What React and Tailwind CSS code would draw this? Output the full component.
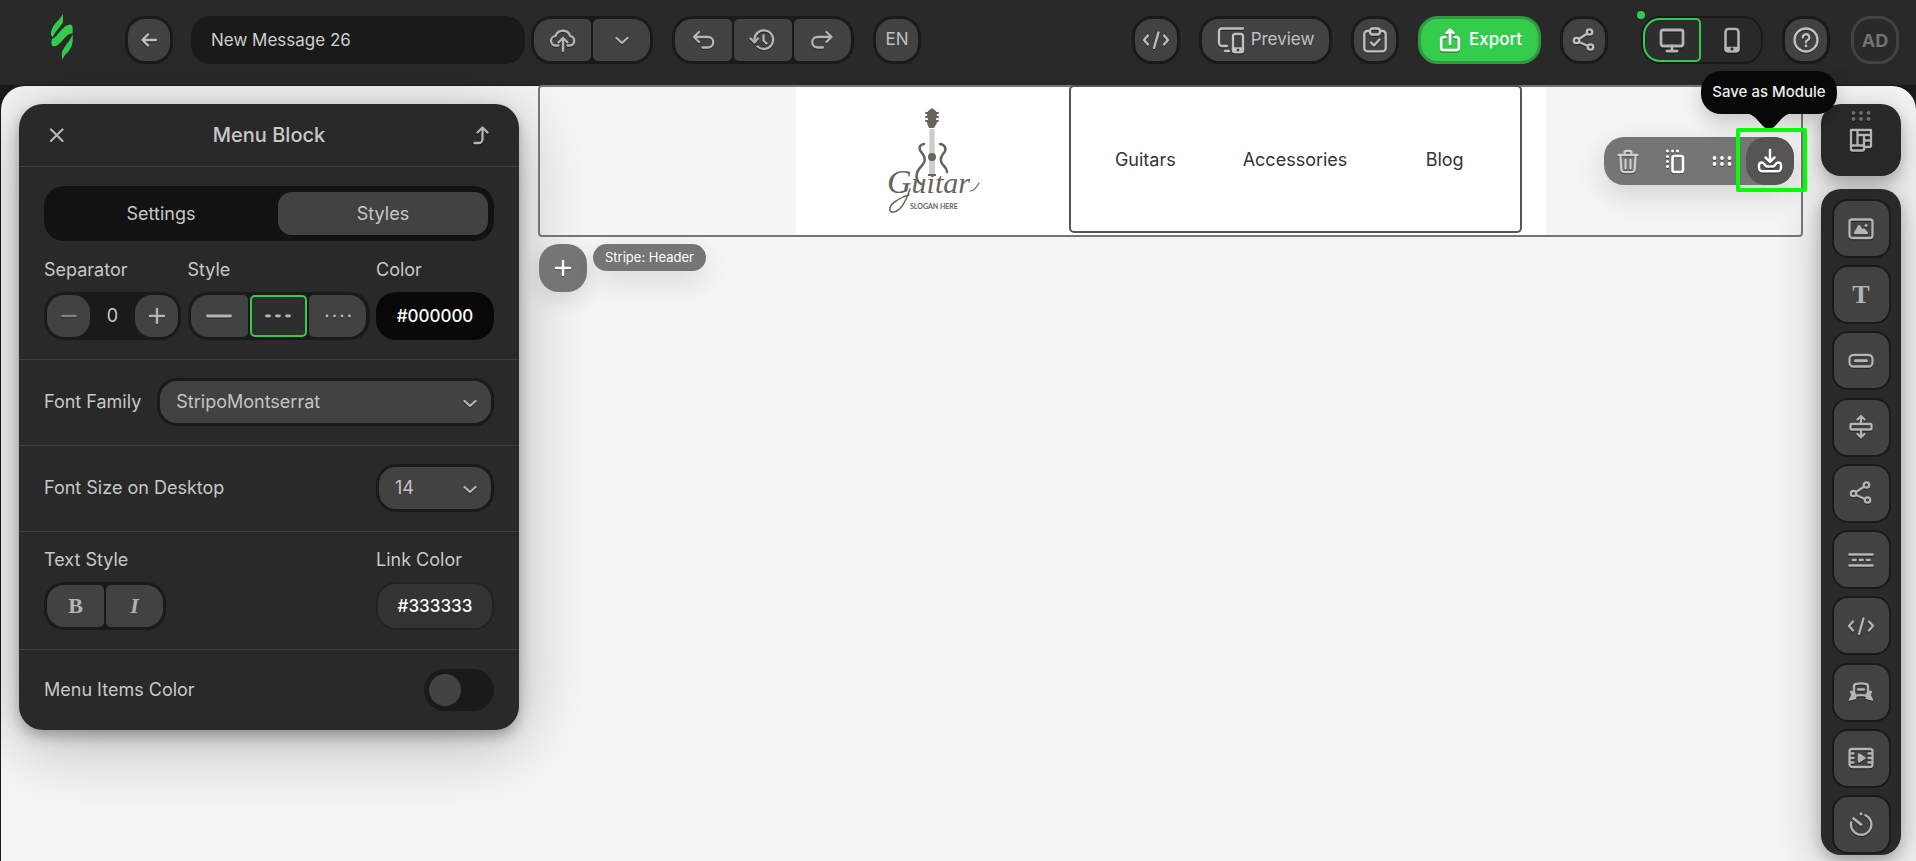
import { useState } from 'react';
import clsx from 'clsx';
import { twMerge } from 'tailwind-merge';

const Icon = ({ children, size = 28, className, strokeWidth = 2.3 }) => (
  <svg
    width={size}
    height={size}
    viewBox="0 0 28 28"
    fill="none"
    stroke="currentColor"
    strokeWidth={strokeWidth}
    strokeLinecap="round"
    strokeLinejoin="round"
    className={clsx('shrink-0 drop-shadow-[0_1px_0_rgba(0,0,0,0.5)]', className)}
    aria-hidden="true"
  >
    {children}
  </svg>
);

const BackIcon = () => (
  <Icon><path d="M21 14H8M13 8.5 7.5 14l5.5 5.5" /></Icon>
);

const CloudUploadIcon = () => (
  <Icon>
    <path d="M9.500 19.500H7a4.700 4.700 0 0 1-.5-9.400A7.700 7.700 0 0 1 21.200 10.200a4.700 4.700 0 0 1-.2 9.300h-2.500" />
    <path d="M14 25V13M9.500 16.500 14 12l4.500 4.500" />
  </Icon>
);

const ChevronIcon = ({ className }) => (
  <Icon className={className}><path d="m8.500 12 5.500 5 5.500-5" /></Icon>
);

const UndoIcon = () => (
  <Icon><path d="M9 6 4 11l5 5M4.500 11H18a5 5 0 0 1 0 10.500h-5.500" /></Icon>
);

const RedoIcon = () => (
  <Icon><path d="m18.500 6 5 5-5 5M23 11H9.500a5 5 0 0 0 0 10.500H15" /></Icon>
);

const HistoryIcon = () => (
  <Icon>
    <path d="M5.500 14a9.300 9.300 0 1 1 3 6.500" />
    <path d="M1.500 12.500 5.500 16.500l3.500-4M14.500 9.500v5l3 3" />
  </Icon>
);

const CodeIcon = () => (
  <Icon><path d="m6 9.500-4 4.500L6 18.500M22 9.500l4 4.500-4 4.500M16.500 6.500l-4.500 15.500" /></Icon>
);

const PreviewIcon = () => (
  <Icon>
    <path d="M26 2.500H5a3 3 0 0 0-3 3V17a3 3 0 0 0 3 3h5M8 25h4" />
    <rect x="16" y="8" width="10" height="18" rx="2.500" />
    <path d="M16 22.500h10v2a1.500 1.500 0 0 1-1.500 1.500h-7a1.500 1.500 0 0 1-1.500-1.500z" fill="currentColor" />
    <circle cx="21" cy="24" r=".5" stroke="#222" strokeWidth={1.5} />
  </Icon>
);

const ClipboardIcon = () => (
  <Icon>
    <path d="M9 5H6.500A3.200 3.200 0 0 0 3.300 8.200v14A3.200 3.200 0 0 0 6.500 25.400h15a3.200 3.200 0 0 0 3.200-3.200v-14A3.200 3.200 0 0 0 21.500 5H19" />
    <rect x="9" y="2.500" width="10" height="6" rx="2.500" />
    <path d="m10 16.500 3 3 5.500-6" />
  </Icon>
);

const ExportIcon = () => (
  <Icon size={26} strokeWidth={3}>
    <path d="M9 11H7a2.500 2.500 0 0 0-2.500 2.500v9A2.500 2.500 0 0 0 7 25h14a2.500 2.500 0 0 0 2.500-2.500v-9A2.500 2.500 0 0 0 21 11h-2" />
    <path d="M14 18.500V4M10.500 6.500 14 3l3.500 3.500" />
  </Icon>
);

const ShareIcon = () => (
  <Icon>
    <circle cx="6.500" cy="14.500" r="2.700" />
    <circle cx="19.500" cy="6" r="2.700" />
    <circle cx="20.500" cy="21" r="2.700" />
    <path d="m9 13 8-5.300M9 16l9 4" />
  </Icon>
);

const DesktopIcon = () => (
  <Icon strokeWidth={2.8}>
    <rect x="3" y="4" width="22" height="16" rx="2" />
    <path d="M14 20v5M9 25.200h10" />
  </Icon>
);

const PhoneIcon = () => (
  <Icon strokeWidth={2.6}>
    <rect x="7.500" y="3" width="13" height="22.500" rx="3" />
    <path d="M8 22h12v2.500H8z" fill="currentColor" />
    <circle cx="14" cy="23" r=".7" stroke="#222" strokeWidth={1.5} />
  </Icon>
);

const HelpIcon = () => (
  <Icon>
    <circle cx="14" cy="14" r="11.500" />
    <path d="M10.800 11.500A3.200 3.200 0 1 1 15.500 14.300c-1 .5-1.500 1-1.500 2.200" />
    <path d="M14 20v.1" strokeWidth={2.8} />
  </Icon>
);

const CloseIcon = () => (
  <Icon><path d="m8 8.500 11.500 11.500M19.500 8.500 8 20" /></Icon>
);

const LevelUpIcon = () => (
  <Icon><path d="M10.500 11.500 15.500 6.500l5 5M15.500 7v11a4 4 0 0 1-4 4H7.500" /></Icon>
);

const TrashIcon = () => (
  <Icon>
    <path d="M4.500 8h19M10.500 7.500V6a2 2 0 0 1 2-2h3a2 2 0 0 1 2 2v1.500" />
    <path d="m6.500 10 .8 12a3.200 3.200 0 0 0 3.200 3.200h7a3.200 3.200 0 0 0 3.200-3.200l.8-12M11.500 13v8.500M16.500 13v8.500" />
  </Icon>
);

const CopyIcon = () => (
  <Icon strokeWidth={2.6}>
    <rect x="11.500" y="9" width="10.500" height="16" rx="2" />
    <path d="M6.500 19.500h.01M6.500 14.500h.01M6.500 9.500h.01M6.500 4h.01M11.500 4h.01M16.500 4h.01" strokeWidth={3} />
  </Icon>
);

const DotsIcon = ({ className }) => (
  <Icon className={className} strokeWidth={3.8}>
    <path d="M6.500 11h.01M14 11h.01M21.500 11h.01M6.500 17h.01M14 17h.01M21.500 17h.01" />
  </Icon>
);

const SaveIcon = () => (
  <Icon strokeWidth={2.5}>
    <path d="M14 3v11.500M9.500 10.500l4.500 4.500 4.500-4.500" />
    <path d="M6 15.500c-2 0-3 1-3 3V21a3.300 3.300 0 0 0 3.300 3.300h15.400A3.300 3.300 0 0 0 25 21v-2.500c0-2-1-3-3-3-2.500 0-2.500 4-5 4h-6c-2.500 0-2.500-4-5-4z" />
  </Icon>
);

const PlusIcon = () => (
  <Icon strokeWidth={2.5}><path d="M14 7v14M7 14h14" /></Icon>
);

const MinusIcon = () => (
  <Icon strokeWidth={2.5}><path d="M7.500 14h13" /></Icon>
);

const ModulesIcon = () => (
  <Icon>
    <path d="M4 4h20v5H10.500M4 4v19a1.500 1.500 0 0 0 1.500 1.500h10a1.500 1.500 0 0 0 1.500-1.500v-3.500H4M10.500 4v15.500M17 9v10.500M17 14.500h7V9M17 21h5.500a1.500 1.500 0 0 0 1.500-1.500v-5" />
  </Icon>
);

const ImageIcon = () => (
  <Icon>
    <rect x="2.500" y="4.500" width="23" height="18.500" rx="2.500" />
    <path d="m8 18 4-7 3.500 5 1.500-1.500 3 3.500z" fill="currentColor" />
    <path d="M19 10.500h.1" strokeWidth={3} />
  </Icon>
);

const ButtonIcon = () => (
  <Icon>
    <rect x="2.500" y="8" width="23" height="11.500" rx="4" />
    <path d="M8.500 13.800h11" strokeWidth={3} />
  </Icon>
);

const SpacerIcon = () => (
  <Icon>
    <rect x="3.500" y="11" width="21" height="5.500" rx="1" />
    <path d="M14 10.500V3.500M10.500 6.500 14 3l3.500 3.500M14 17v7M10.500 21l3.500 3.500 3.500-3.500" />
  </Icon>
);

const DividerIcon = () => (
  <Icon>
    <path d="M2.500 8.500h23M2.500 19.500h23M6 14h2.500M13 14h2.500M20 14h2.500" strokeWidth={2.6} />
  </Icon>
);

const AccordionIcon = () => (
  <Icon>
    <path d="M7 18.500V8.500C7 7 8 6 9.500 6c3-.8 6-.8 9 0C20 6 21 7 21 8.500v10c-4-1.500-10-1.500-14 0z" />
    <path d="M11 11.500h6" />
    <path d="M6.500 13.500H3.500L5 17l-2.500 5 6-1.500v-4zM21.500 13.500h3L23 17l2.500 5-6-1.500v-4z" fill="currentColor" strokeWidth={1.6} />
  </Icon>
);

const VideoIcon = () => (
  <Icon>
    <rect x="2.500" y="5" width="23" height="18" rx="2.500" />
    <path d="M12 10.500v7l5.500-3.500z" fill="currentColor" />
    <path d="M3 9.500h3.500M3 14h3.500M3 18.500h3.500M21.500 9.500H25M21.500 14H25M21.500 18.500H25" />
  </Icon>
);

const TimerIcon = () => (
  <Icon>
    <path d="M18.500 5.300a10.200 10.200 0 1 1-14.300 7.200" />
    <path d="m6.500 8.500 7.500 6" strokeWidth={2.8} />
    <path d="M14 4h.1" strokeWidth={2.8} />
  </Icon>
);

const StripoLogo = () => (
  <svg width="24" height="47" viewBox="0 0 24 47" fill="#32cb4b" role="img" aria-label="Stripo">
    <path d="M13 0v8C11 13 5 17 3 23 0 22 1 17 2 15 4 9 10 6 13 0Z" />
    <path d="M2 25c6-2 10-14 18-14.500 3 0 3 4 2.500 9C16 18 12 31 4 32.500c-3 0-3-5-2-7.500Z" />
    <path d="M22.500 20c1 9-.5 13-4.500 18-3 3-5 5-5.500 8-1.500-6-.5-9 1.500-12 3-5 7-8 8.500-14Z" />
  </svg>
);

const GuitarLogo = () => (
  <svg width="96" height="112" viewBox="0 0 96 112" role="img" aria-label="Guitar">
    <g stroke="#68635c" strokeWidth="2" strokeLinecap="round">
      <path d="M42 8h12M42 12h12M42 16h12" />
    </g>
    <path d="m44 6 4-3 4 3 1 3-1 6 1 3-3 5h-5l-2-5 1-3-1-6z" fill="#68635c" />
    <path d="M45.500 24h5L51 70h-6z" fill="#ccc" />
    <circle cx="48" cy="52" r="4" fill="#68635c" />
    <path d="M44 70h8" stroke="#68635c" strokeWidth="2" />
    <g fill="none" stroke="#68635c" strokeWidth="2.500" strokeLinecap="round">
      <path d="M40 39c-6 1-5 6-2 9 6 8 1 11-3 16-4 6-3 12 2 15" />
      <path d="M56 39c6 1 7 6 3 10-4 5-2 9 1 12 2 2 3 4 3 6" />
    </g>
    <text x="3" y="88" fontFamily="'Liberation Serif', serif" fontStyle="italic" fontSize="30" fill="#68635c">
      <tspan fontSize="34">G</tspan>uitar
    </text>
    {/* swash under the name */}
    <path d="M26 84c-3 10-9 22-16 23-6 1-6-6 2-11 4-3 8-5 13-6" fill="none" stroke="#68635c" strokeWidth="1.500" strokeLinecap="round" />
    <path d="M86 86c4 0 6-3 9-8" fill="none" stroke="#68635c" strokeWidth="1.200" strokeLinecap="round" />
    <text x="26" y="104" fontFamily="Lato, sans-serif" fontWeight="700" fontSize="7" fill="#68635c">SLOGAN HERE</text>
  </svg>
);

const RoundButton = ({ label, className, children }) => (
  <button
    type="button"
    aria-label={label}
    className={twMerge(
      'flex h-12 shrink-0 items-center justify-center gap-[6px] rounded-[20px] border-3 border-[#1a1a1a] bg-[#424242] text-[#c0c0c0]',
      className
    )}
  >
    {children}
  </button>
);

const ButtonGroup = ({ children, className }) => (
  <div
    className={clsx(
      'flex h-12 shrink-0 gap-[2px] rounded-[20px] bg-[#1a1a1a] p-[3px] text-[#b4b4b4]',
      '[&>button]:rounded-[5px] [&>button:first-child]:rounded-l-[17px] [&>button:last-child]:rounded-r-[17px]',
      className
    )}
  >
    {children}
  </div>
);

const GroupButton = ({ label, active, onClick, children }) => (
  <button
    type="button"
    aria-label={label}
    aria-pressed={active}
    onClick={onClick}
    className={clsx(
      'flex flex-1 items-center justify-center',
      active ? 'bg-[#2e2e2e] ring-2 ring-[#32cb4b] ring-inset' : 'bg-[#424242]'
    )}
  >
    {children}
  </button>
);

const Header = () => (
  <header className="flex h-[85px] shrink-0 items-start gap-[19px] bg-[#292929] pt-4 pr-[17px] pl-[50px]">
    <a href="#" className="-mt-[2px] mr-8"><StripoLogo /></a>
    <RoundButton label="Back" className="w-12"><BackIcon /></RoundButton>
    <div className="-ml-px flex gap-[6px]">
      <input
        aria-label="Message name"
        defaultValue="New Message 26"
        className="h-12 w-[334px] rounded-[20px] bg-[#1a1a1a] px-5 text-[17px] text-[#cfcfcf] outline-none"
      />
      <ButtonGroup className="w-[122px]">
        <GroupButton label="Save"><CloudUploadIcon /></GroupButton>
        <GroupButton label="Save options"><ChevronIcon /></GroupButton>
      </ButtonGroup>
    </div>
    <ButtonGroup className="w-[182px]">
      <GroupButton label="Undo"><UndoIcon /></GroupButton>
      <GroupButton label="Version history"><HistoryIcon /></GroupButton>
      <GroupButton label="Redo"><RedoIcon /></GroupButton>
    </ButtonGroup>
    <RoundButton label="Language" className="w-12 text-[17px]">EN</RoundButton>

    <RoundButton label="Code editor" className="ml-auto w-12"><CodeIcon /></RoundButton>
    <RoundButton className="w-[133px] text-[17px]"><PreviewIcon />Preview</RoundButton>
    <RoundButton label="Checklist" className="w-12"><ClipboardIcon /></RoundButton>
    <RoundButton className="w-[123px] border-[#2f9a3f] bg-[#34cc4b] text-[17px] font-medium text-white">
      <ExportIcon />Export
    </RoundButton>
    <RoundButton label="Share" className="w-12"><ShareIcon /></RoundButton>
    <div className="relative ml-[14px]">
      <span className="absolute -top-[5px] -left-1 size-2 rounded-full bg-[#32cb4b]" />
      <div className="flex h-12 w-[122px] gap-[2px] rounded-[20px] border-2 border-[#1a1a1a] text-[#b4b4b4]">
        <button
          type="button"
          aria-label="Desktop"
          aria-pressed="true"
          className="flex flex-1 items-center justify-center rounded-l-[17px] rounded-r-[5px] bg-[#2e2e2e] ring-2 ring-[#32cb4b] ring-inset"
        >
          <DesktopIcon />
        </button>
        <button type="button" aria-label="Mobile" className="flex flex-1 items-center justify-center">
          <PhoneIcon />
        </button>
      </div>
    </div>
    <RoundButton label="Help" className="w-12"><HelpIcon /></RoundButton>
    <RoundButton label="Account" className="ml-[2px] w-12 border-[#424242] bg-[#292929] text-[18px] font-bold text-[#757371]">AD</RoundButton>
  </header>
);

const DropDown = ({ id, value, className }) => (
  <div className={clsx('relative', className)}>
    <select
      id={id}
      defaultValue={value}
      className="h-12 w-full appearance-none rounded-[20px] border-3 border-[#1a1a1a] bg-[#424242] pl-4 text-[18px] text-[#c4c4c4] outline-none"
    >
      <option>{value}</option>
    </select>
    <ChevronIcon className="pointer-events-none absolute top-[11px] right-[10px] text-[#b4b4b4]" />
  </div>
);

const lineStyles = [
  { name: 'Solid', path: 'M2.500 14h23' },
  { name: 'Dashed', path: 'M2.500 14h3M12.500 14h3M22.500 14h3' },
  { name: 'Dotted', path: 'M3 14h.01M10.500 14h.01M18 14h.01M25.500 14h.01' }
];

const SettingsPanel = () => {
  const [tab, setTab] = useState('Styles');
  const [lineStyle, setLineStyle] = useState('Dashed');

  return (
    <aside className="mt-[18px] w-[500px] shrink-0 self-start rounded-3xl bg-[#292929] text-[18px] leading-6 text-[#c8c8c8] shadow-[0_6px_14px_rgba(0,0,0,0.28),0_12px_70px_rgba(0,0,0,0.28)]">
      <div className="flex h-[63px] items-center justify-between border-b border-[#3d3d3d] px-6">
        <button type="button" aria-label="Close" className="text-[#b4b4b4]"><CloseIcon /></button>
        <h2 className="text-[20px] font-medium">Menu Block</h2>
        <button type="button" aria-label="Parent block" className="text-[#b4b4b4]"><LevelUpIcon /></button>
      </div>

      <div className="border-b border-[#3d3d3d] px-[25px] py-[19px]">
        <div className="grid h-[55px] grid-cols-[1fr_210px] gap-[6px] rounded-[20px] bg-[#121212] p-[6px]">
          {['Settings', 'Styles'].map((name) => (
            <button
              key={name}
              type="button"
              onClick={() => setTab(name)}
              className={clsx('rounded-[14px]', tab === name && 'bg-[#424242]')}
            >
              {name}
            </button>
          ))}
        </div>

        <div className="mt-[17px] flex justify-between">
          <div className="w-[137px]">
            <label htmlFor="separator" className="block">Separator</label>
            <div className="mt-[10px] flex h-12 rounded-[20px] bg-[#1a1a1a] p-[3px]">
              <button type="button" aria-label="Decrease" className="flex w-[43px] shrink-0 items-center justify-center rounded-[17px] bg-[#424242] text-[#808080]">
                <MinusIcon />
              </button>
              <input id="separator" defaultValue="0" className="w-full min-w-0 flex-1 text-center outline-none" />
              <button type="button" aria-label="Increase" className="flex w-[43px] shrink-0 items-center justify-center rounded-[17px] bg-[#424242] text-[#b4b4b4]">
                <PlusIcon />
              </button>
            </div>
          </div>
          <div className="w-[182px]">
            <div>Style</div>
            <ButtonGroup className="mt-[10px]">
              {lineStyles.map(({ name, path }) => (
                <GroupButton key={name} label={name} active={lineStyle === name} onClick={() => setLineStyle(name)}>
                  <Icon strokeWidth={2.8}><path d={path} /></Icon>
                </GroupButton>
              ))}
            </ButtonGroup>
          </div>
          <div className="w-[118px]">
            <label htmlFor="color" className="block">Color</label>
            <input
              id="color"
              defaultValue="#000000"
              className="mt-[10px] h-12 w-full rounded-[20px] bg-[#080808] text-center text-[17px] font-medium text-white outline-none"
            />
          </div>
        </div>
      </div>

      <div className="flex items-center gap-4 border-b border-[#3d3d3d] px-[25px] pt-[18px] pb-[19px]">
        <label htmlFor="font-family" className="shrink-0">Font Family</label>
        <DropDown id="font-family" value="StripoMontserrat" className="flex-1" />
      </div>

      <div className="flex items-center justify-between border-b border-[#3d3d3d] px-[25px] pt-[18px] pb-[19px]">
        <label htmlFor="font-size">Font Size on Desktop</label>
        <DropDown id="font-size" value="14" className="w-[118px]" />
      </div>

      <div className="flex justify-between border-b border-[#3d3d3d] px-[25px] pt-4 pb-[19px]">
        <div className="w-[122px]">
          <div>Text Style</div>
          <ButtonGroup className="mt-[10px] font-['Liberation_Serif',serif] text-[22px] font-bold">
            <GroupButton label="Bold">B</GroupButton>
            <GroupButton label="Italic"><span className="italic">I</span></GroupButton>
          </ButtonGroup>
        </div>
        <div className="w-[118px]">
          <label htmlFor="link-color" className="block">Link Color</label>
          <input
            id="link-color"
            defaultValue="#333333"
            className="mt-[10px] h-12 w-full rounded-[20px] border-2 border-[#222] bg-[#333] text-center text-[17px] font-medium text-white outline-none"
          />
        </div>
      </div>

      <div className="flex items-center justify-between px-[25px] py-[19px]">
        <label htmlFor="items-color">Menu Items Color</label>
        <input
          id="items-color"
          type="checkbox"
          className="h-[42px] w-[70px] appearance-none rounded-full bg-[#1a1a1a] p-[5px] before:block before:size-8 before:rounded-full before:bg-[#424242] checked:before:ml-7"
        />
      </div>
    </aside>
  );
};

const StripeToolbar = () => (
  <div className="absolute top-[50px] right-[7px] z-10 flex h-12 w-[190px] items-center rounded-[20px] bg-[#757575] text-white shadow-[0_10px_30px_rgba(0,0,0,0.15)]">
    <button type="button" aria-label="Delete" className="flex flex-1 justify-center text-[#d0d0d0]"><TrashIcon /></button>
    <button type="button" aria-label="Copy" className="flex flex-1 justify-center"><CopyIcon /></button>
    <button type="button" aria-label="Move" className="flex flex-1 justify-center"><DotsIcon /></button>
    <button
      type="button"
      aria-label="Save as Module"
      aria-describedby="save-tooltip"
      className="flex size-12 items-center justify-center rounded-[20px] bg-[#575553]"
    >
      <SaveIcon />
    </button>
    <div
      id="save-tooltip"
      role="tooltip"
      className="absolute -top-[66px] -right-[43px] flex h-[43px] w-[136px] items-center justify-center rounded-[20px] bg-[#080808] text-[15px] font-medium whitespace-nowrap text-[#ececec] shadow-[0_8px_20px_rgba(0,0,0,0.2)]"
    >
      Save as Module
      <svg width="48" height="16" viewBox="0 0 48 16" fill="#080808" className="absolute top-[42px]" aria-hidden="true">
        <path d="M0 0h48c-9 1-12 7-17 12-4 5-10 5-14 0C12 7 9 1 0 0Z" />
      </svg>
    </div>
    <div className="pointer-events-none absolute -top-[9px] -right-[13px] h-[64px] w-[71px] rounded-[2px] border-4 border-[#00ff00]" />
  </div>
);

const Stripe = () => (
  <div className="-mt-px min-w-0 flex-1">
    <div className="relative flex h-[152px] justify-center rounded-[4px] border-2 border-[#757575]">
      <div className="flex w-[750px] bg-white">
        <div className="flex flex-1 items-center justify-center">
          <GuitarLogo />
        </div>
        <div className="-mt-[2px] mr-6 mb-[2px] flex w-[453px] items-center rounded-[5px] border-2 border-[#555]">
          {['Guitars', 'Accessories', 'Blog'].map((item) => (
            <a key={item} href="#" className="flex-1 basis-0 text-center text-[18px] text-[#333]">{item}</a>
          ))}
        </div>
      </div>
      <StripeToolbar />
    </div>
    <div className="mt-[7px] flex items-start gap-[6px] pl-px text-white">
      <button
        type="button"
        aria-label="Add stripe"
        className="flex size-12 items-center justify-center rounded-[20px] bg-[#757575] shadow-[0_8px_20px_rgba(0,0,0,0.12)]"
      >
        <PlusIcon />
      </button>
      <span className="rounded-[14px] bg-[#757575] px-3 text-[13px] leading-[27px] shadow-[0_10px_30px_rgba(0,0,0,0.12)]">
        Stripe: Header
      </span>
    </div>
  </div>
);

const blocks = [
  { name: 'Image', icon: <ImageIcon /> },
  { name: 'Text', icon: <span className="font-['Liberation_Serif',serif] text-[26px] font-bold">T</span> },
  { name: 'Button', icon: <ButtonIcon /> },
  { name: 'Spacer', icon: <SpacerIcon /> },
  { name: 'Social', icon: <ShareIcon /> },
  { name: 'Menu', icon: <DividerIcon /> },
  { name: 'HTML', icon: <CodeIcon /> },
  { name: 'Accordion', icon: <AccordionIcon /> },
  { name: 'Video', icon: <VideoIcon /> },
  { name: 'Timer', icon: <TimerIcon /> }
];

const BlocksBar = () => (
  <aside className="mt-[18px] mb-[6px] flex w-20 shrink-0 flex-col gap-[13px]">
    <button
      type="button"
      aria-label="Modules"
      className="flex h-[72px] flex-col items-center rounded-[20px] bg-[#292929] text-[#b4b4b4] shadow-[0_6px_14px_rgba(0,0,0,0.22),0_10px_50px_rgba(0,0,0,0.2)]"
    >
      <DotsIcon className="-mt-[2px] -mb-[4px] text-[#6f6d6b]" />
      <ModulesIcon />
    </button>
    <div className="flex flex-1 flex-col items-center justify-between rounded-[20px] bg-[#292929] pt-[10px] pb-px shadow-[0_6px_14px_rgba(0,0,0,0.22),0_10px_50px_rgba(0,0,0,0.25)]">
      {blocks.map(({ name, icon }) => (
        <button
          key={name}
          type="button"
          aria-label={name}
          className="flex size-[59px] items-center justify-center rounded-2xl border-2 border-[#1a1a1a] bg-[#424242] text-[#b4b4b4]"
        >
          {icon}
        </button>
      ))}
    </div>
  </aside>
);

const App = () => (
  <div className="flex min-h-screen flex-col bg-[#1a1a1a] font-[Inter,sans-serif]">
    <Header />
    <main className="mt-px ml-px flex flex-1 rounded-t-3xl bg-[#f5f5f5] pr-[15px] pl-[18px]">
      <SettingsPanel />
      <div className="ml-[19px] flex min-w-0 flex-1 gap-[18px]">
        <Stripe />
        <BlocksBar />
      </div>
    </main>
  </div>
);

export default App;
